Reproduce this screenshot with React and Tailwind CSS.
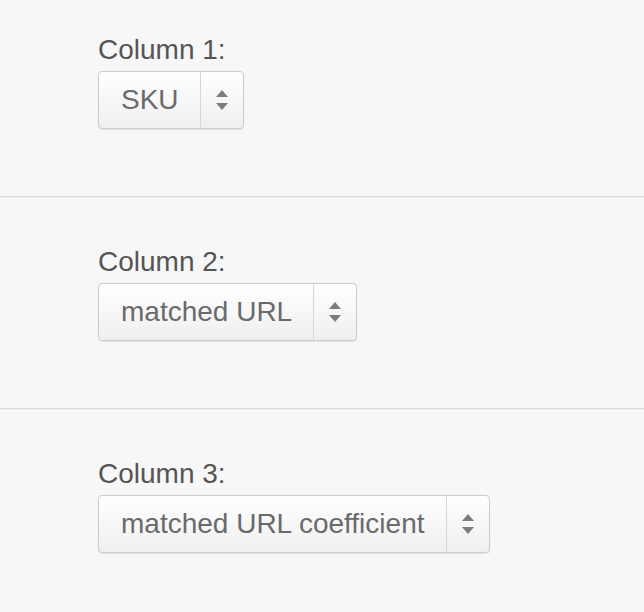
const columns = [
  { label: 'Column 1:', value: 'SKU' },
  { label: 'Column 2:', value: 'matched URL' },
  { label: 'Column 3:', value: 'matched URL coefficient' },
];

function SelectBox({ value }) {
  return (
    <div className="inline-flex h-[58px] items-stretch rounded-[4px] border border-[#cbcbcb] bg-gradient-to-b from-white to-[#efefef] shadow-[0_1px_1px_rgba(0,0,0,0.08)]">
      <div className="flex items-center pl-[22px] pr-[21px] text-[28px] leading-none text-[#6a6a6a]">
        {value}
      </div>
      <div className="flex w-[43px] flex-col items-center justify-center gap-[6px] border-l border-[#d6d6d6]">
        <svg width="12" height="7" viewBox="0 0 12 7">
          <path d="M6 0L12 7H0z" fill="#7d7d7d" />
        </svg>
        <svg width="12" height="7" viewBox="0 0 12 7">
          <path d="M0 0h12L6 7z" fill="#7d7d7d" />
        </svg>
      </div>
    </div>
  );
}

export default function App() {
  return (
    <div className="min-h-[612px] w-full bg-[#f7f7f7] font-['Liberation_Sans',Arial,sans-serif]">
      {columns.map((col, i) => (
        <div key={col.label}>
          {i > 0 && (
            <div>
              <div className="h-px bg-[#dddddd]" />
              <div className="h-px bg-[#ececec]" />
              <div className="h-px bg-white" />
            </div>
          )}
          <div className={`px-[98px] pb-[67px] ${i === 0 ? 'pt-[34px]' : 'pt-[47px]'}`}>
            <div className="mb-[5px] text-[28px] leading-[32px] text-[#555555]">{col.label}</div>
            <SelectBox value={col.value} />
          </div>
        </div>
      ))}
    </div>
  );
}
